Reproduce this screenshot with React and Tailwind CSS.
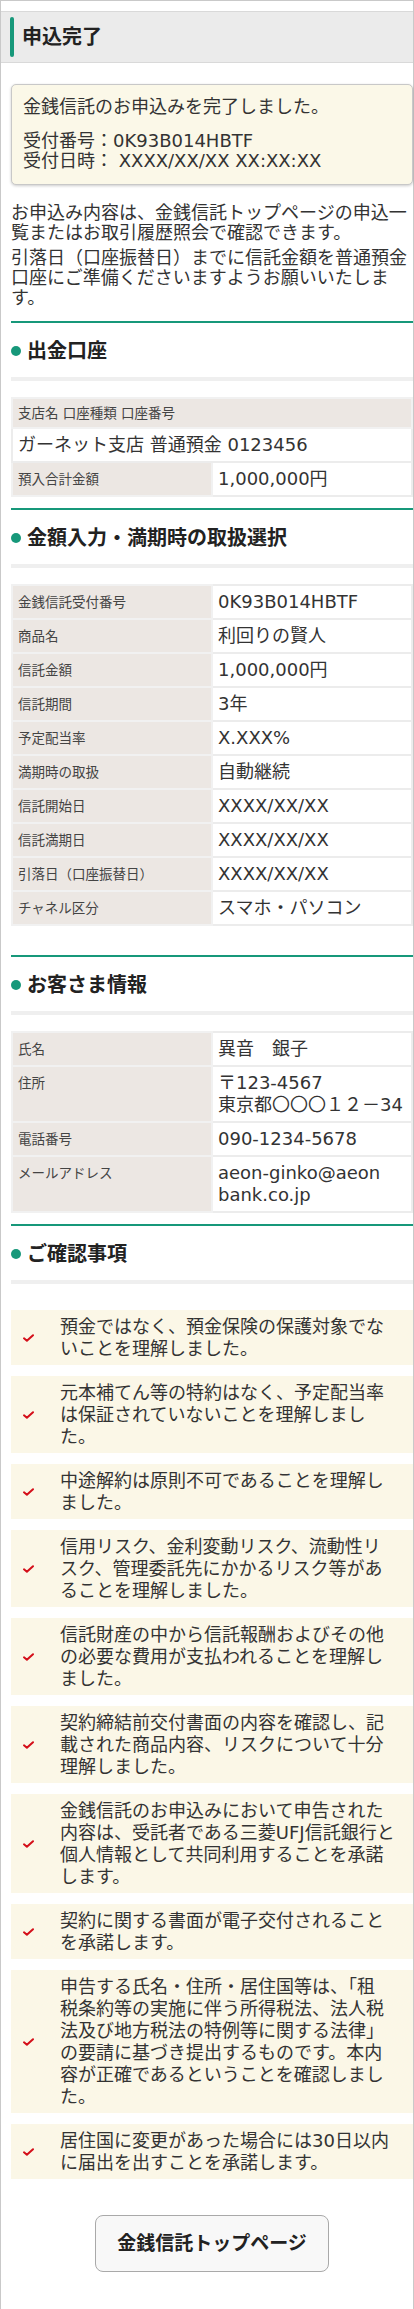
import React from 'react';

const GREEN = 'bg-[#17987a]';

const SectionTitle = ({ title, className = '' }) => (
  <div className={className}>
    <div className="flex items-center border-t-2 border-[#17987a] pt-[15px] pb-[13px]">
      <span className={`h-[10px] w-[10px] shrink-0 rounded-full ${GREEN}`} />
      <h2 className="ml-[6px] text-[20px] font-bold leading-[26px] text-[#222]">{title}</h2>
    </div>
    <div className="h-[4px] bg-[#efefef]" />
  </div>
);

const Row = ({ label, children }) => (
  <tr>
    <td className="w-[200px] border-2 border-[#f1f1f1] bg-[#ece7e3] px-[5px] py-[5px] align-top text-[13.5px] leading-[22px] text-[#444]">
      {label}
    </td>
    <td className="border-2 border-[#ececec] bg-white px-[5px] py-[5px] align-top text-[18px] leading-[22px] text-[#333]">
      {children}
    </td>
  </tr>
);

const Check = () => (
  <svg width="11" height="8" viewBox="0 0 11 8" className="shrink-0">
    <path d="M1 4.3 L3.9 6.8 L10 1.2" fill="none" stroke="#d40f1a" strokeWidth="2" strokeLinecap="round" strokeLinejoin="round" />
  </svg>
);

const confirms = [
  ['預金ではなく、預金保険の保護対象でな', 'いことを理解しました。'],
  ['元本補てん等の特約はなく、予定配当率', 'は保証されていないことを理解しまし', 'た。'],
  ['中途解約は原則不可であることを理解し', 'ました。'],
  ['信用リスク、金利変動リスク、流動性リ', 'スク、管理委託先にかかるリスク等があ', 'ることを理解しました。'],
  ['信託財産の中から信託報酬およびその他', 'の必要な費用が支払われることを理解し', 'ました。'],
  ['契約締結前交付書面の内容を確認し、記', '載された商品内容、リスクについて十分', '理解しました。'],
  ['金銭信託のお申込みにおいて申告された', '内容は、受託者である三菱UFJ信託銀行と', '個人情報として共同利用することを承諾', 'します。'],
  ['契約に関する書面が電子交付されること', 'を承諾します。'],
  [
    '申告する氏名・住所・居住国等は、「租',
    '税条約等の実施に伴う所得税法、法人税',
    '法及び地方税法の特例等に関する法律」',
    'の要請に基づき提出するものです。本内',
    '容が正確であるということを確認しまし',
    'た。',
  ],
  ['居住国に変更があった場合には30日以内', 'に届出を出すことを承諾します。'],
];

export default function App() {
  return (
    <div className="w-[414px] border border-[#c9c9c9] bg-white pb-[38px] pt-[10px] font-['DejaVu_Sans','Noto_Sans_CJK_JP',sans-serif] text-[#333]">
      {/* page title */}
      <div className="flex h-[52px] items-center border-y border-[#d9d9d9] bg-[#ebebeb] pl-[9px]">
        <span className={`h-[40px] w-[4px] rounded-full ${GREEN}`} />
        <h1 className="ml-[8px] text-[20px] font-bold leading-[26px] text-[#222]">申込完了</h1>
      </div>

      <div className="pl-[10px]">
        <div className="mt-[21px] rounded-[5px] border border-[#c8c8c8] bg-[#fbf8e8] px-[11px] pb-[13px] pt-[11px] shadow-[0_1px_3px_rgba(0,0,0,0.2)]">
          <p className="text-[18px] leading-[22px]">金銭信託のお申込みを完了しました。</p>
          <p className="mt-[13px] text-[18px] leading-[20px]">
            受付番号：0K93B014HBTF
            <br />
            受付日時： XXXX/XX/XX XX:XX:XX
          </p>
        </div>

        <p className="mt-[18px] text-[18px] leading-[20px]">
          お申込み内容は、金銭信託トップページの申込一
          <br />
          覧またはお取引履歴照会で確認できます。
        </p>
        <p className="mt-[5px] text-[18px] leading-[20px]">
          引落日（口座振替日）までに信託金額を普通預金
          <br />
          口座にご準備くださいますようお願いいたしま
          <br />
          す。
        </p>

        {/* 出金口座 */}
        <SectionTitle title="出金口座" className="mt-[13px]" />
        <table className="mt-[16px] w-full border-collapse">
          <tbody>
            <tr>
              <td colSpan={2} className="border-2 border-[#f1f1f1] bg-[#ece7e3] px-[5px] py-[3px] text-[13.5px] leading-[22px] text-[#444]">
                支店名 口座種類 口座番号
              </td>
            </tr>
            <tr>
              <td colSpan={2} className="border-2 border-[#ececec] bg-white px-[5px] py-[5px] text-[18px] leading-[22px]">
                ガーネット支店 普通預金 0123456
              </td>
            </tr>
            <Row label="預入合計金額">1,000,000円</Row>
          </tbody>
        </table>

        {/* 金額入力・満期時の取扱選択 */}
        <SectionTitle title="金額入力・満期時の取扱選択" className="mt-[11px]" />
        <table className="mt-[16px] w-full border-collapse">
          <tbody>
            <Row label="金銭信託受付番号">0K93B014HBTF</Row>
            <Row label="商品名">利回りの賢人</Row>
            <Row label="信託金額">1,000,000円</Row>
            <Row label="信託期間">3年</Row>
            <Row label="予定配当率">X.XXX%</Row>
            <Row label="満期時の取扱">自動継続</Row>
            <Row label="信託開始日">XXXX/XX/XX</Row>
            <Row label="信託満期日">XXXX/XX/XX</Row>
            <Row label="引落日（口座振替日）">XXXX/XX/XX</Row>
            <Row label="チャネル区分">スマホ・パソコン</Row>
          </tbody>
        </table>

        {/* お客さま情報 */}
        <SectionTitle title="お客さま情報" className="mt-[29px]" />
        <table className="mt-[16px] w-full border-collapse">
          <tbody>
            <Row label="氏名">異音　銀子</Row>
            <Row label="住所">
              〒123-4567
              <br />
              東京都〇〇〇１２－34
            </Row>
            <Row label="電話番号">090-1234-5678</Row>
            <Row label="メールアドレス">
              aeon-ginko@aeon
              <br />
              bank.co.jp
            </Row>
          </tbody>
        </table>

        {/* ご確認事項 */}
        <SectionTitle title="ご確認事項" className="mt-[11px]" />
        <ul className="mt-[26px] flex flex-col gap-[11px]">
          {confirms.map((lines, i) => (
            <li key={i} className="flex items-center bg-[#fbf7e7] pb-[5px] pl-[12px] pt-[6px]">
              <Check />
              <p className="ml-[26px] text-[18px] leading-[22px]">
                {lines.map((l, j) => (
                  <React.Fragment key={j}>
                    {j > 0 && <br />}
                    {l}
                  </React.Fragment>
                ))}
              </p>
            </li>
          ))}
        </ul>

        <div className="mt-[36px] flex justify-center">
          <button className="h-[57px] w-[234px] rounded-[8px] border border-[#a9a9a9] bg-[#f8f8f8] text-[19px] font-bold text-[#222]">
            金銭信託トップページ
          </button>
        </div>
      </div>
    </div>
  );
}
